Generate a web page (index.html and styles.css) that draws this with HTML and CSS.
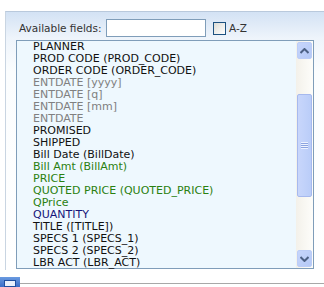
FILE: index.html
```html
<!DOCTYPE html>
<html lang="en">
<head>
  <meta charset="UTF-8">
  <title>Available fields</title>
  <link rel="stylesheet" href="styles.css">
</head>
<body>
  <div class="panel">
    <div class="toolbar">
      <label class="caption" for="filter">Available fields:</label>
      <input id="filter" class="filter" type="text">
      <span class="sort">
        <span class="check"></span>
        <span class="sort-label">A-Z</span>
      </span>
    </div>
    <div class="listbox">
      <ul class="items">
        <li>PLANNER</li>
        <li>PROD CODE (PROD_CODE)</li>
        <li>ORDER CODE (ORDER_CODE)</li>
        <li class="date">ENTDATE [yyyy]</li>
        <li class="date">ENTDATE [q]</li>
        <li class="date">ENTDATE [mm]</li>
        <li class="date">ENTDATE</li>
        <li>PROMISED</li>
        <li>SHIPPED</li>
        <li>Bill Date (BillDate)</li>
        <li class="money">Bill Amt (BillAmt)</li>
        <li class="money">PRICE</li>
        <li class="money">QUOTED PRICE (QUOTED_PRICE)</li>
        <li class="money">QPrice</li>
        <li class="count">QUANTITY</li>
        <li>TITLE ([TITLE])</li>
        <li>SPECS 1 (SPECS_1)</li>
        <li>SPECS 2 (SPECS_2)</li>
        <li>LBR ACT (LBR_ACT)</li>
      </ul>
      <div class="scrollbar">
        <div class="btn">
          <svg width="9" height="6" viewBox="0 0 9 6"><path d="M0.5 5 L4.5 1 L8.5 5" fill="none" stroke="#4d6185" stroke-width="2"/></svg>
        </div>
        <div class="track top"></div>
        <div class="thumb">
          <span class="grip"></span>
        </div>
        <div class="track"></div>
        <div class="btn">
          <svg width="9" height="6" viewBox="0 0 9 6"><path d="M0.5 1 L4.5 5 L8.5 1" fill="none" stroke="#4d6185" stroke-width="2"/></svg>
        </div>
      </div>
    </div>
  </div>
  <div class="footer">
    <span class="corner"><span class="corner-inner"></span></span>
  </div>
</body>
</html>
```

FILE: styles.css
```css
body {
  margin: 0;
  padding: 0;
  background: #fff;
  font-family: "DejaVu Sans", Verdana, sans-serif;
  font-size: 11px;
  color: #111;
  width: 324px;
  height: 287px;
  overflow: hidden;
}
.panel {
  margin: 11px 0 0 5px;
  height: 258px;
  border-top: 1px solid #b9c9dc;
  border-left: 1px solid #c9d5e2;
  background: linear-gradient(#d3e2f4, #eef4fb 26px, #fbfdfe 60px, #fff);
  padding: 0 10px 0 10px;
}
.toolbar {
  display: flex;
  align-items: center;
  height: 24px;
  padding: 4px 0 0 3px;
}
.caption {
  color: #333;
  width: 87px;
  font-size: 10.5px;
}
.filter {
  box-sizing: border-box;
  width: 100px;
  height: 18px;
  margin: 0;
  padding: 1px;
  border: 1px solid #7f9db9;
  background: #fff;
  font: inherit;
}
.sort {
  display: flex;
  align-items: center;
  margin-left: 7px;
}
.check {
  width: 11px;
  height: 11px;
  border: 1px solid #1c5180;
  background: linear-gradient(135deg, #dcdcd6, #fff);
}
.sort-label {
  margin-left: 3px;
  color: #333;
  font-size: 10.5px;
}
.listbox {
  display: flex;
  height: 227px;
  border: 1px solid #7f9db9;
  background: #eef8fe;
}
.items {
  flex: 1;
  margin: 0;
  padding: 0 0 0 16px;
  list-style: none;
}
.items li {
  height: 12px;
  line-height: 12px;
  white-space: nowrap;
}
.items .date {
  color: #808080;
}
.items .money {
  color: #2a8010;
}
.items .count {
  color: #15157a;
}
.scrollbar {
  width: 17px;
  display: flex;
  flex-direction: column;
  background: linear-gradient(90deg, #f3f1ea, #fdfdfa);
}
.btn {
  height: 15px;
  margin: 1px;
  border: 1px solid #bccdf7;
  border-radius: 2px;
  background: linear-gradient(135deg, #c6d5fc, #b5c9f6);
  display: flex;
  align-items: center;
  justify-content: center;
}
.track {
  flex: 1;
}
.track.top {
  flex: 0 0 34px;
}
.thumb {
  height: 101px;
  margin: 0 1px;
  border: 1px solid #a6b9ee;
  border-radius: 2px;
  background: linear-gradient(90deg, #c8d6fb, #bacdf8);
  display: flex;
  align-items: center;
  justify-content: center;
}
.grip {
  width: 7px;
  height: 7px;
  background: repeating-linear-gradient(#eef3fe 0 1px, #8ca4e0 1px 2px);
}
.footer {
  margin: 0;
  height: 13px;
  position: relative;
  border-bottom: 1px solid #a8a8a8;
}
.corner {
  position: absolute;
  left: 0;
  top: 7px;
  width: 20px;
  height: 11px;
  box-sizing: border-box;
  padding: 3px 4px 0 4px;
  background: linear-gradient(#6a9ae0, #3568c4);
}
.corner-inner {
  display: block;
  height: 5px;
  border: 1px solid #1f4f9f;
  background: #e8f0fc;
}
```
